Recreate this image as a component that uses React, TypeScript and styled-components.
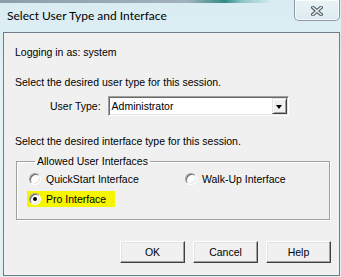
import styled, { createGlobalStyle } from 'styled-components';

const GlobalStyle = createGlobalStyle`
  html, body {
    margin: 0;
    padding: 0;
    width: 341px;
    height: 277px;
    overflow: hidden;
  }
  body {
    font-family: "Liberation Sans", Arial, sans-serif;
    font-size: 10.5px;
    color: #000;
  }
`;

const Window = styled.div`
  width: 341px;
  height: 277px;
  display: flex;
  flex-direction: column;
  background: linear-gradient(to bottom, #d9ecf2 0%, #e6f3f6 40%, #e2f0f4 100%);
  box-sizing: border-box;
`;

const GlassStrip = styled.div`
  height: 3px;
  background: linear-gradient(
    to right,
    #8e9ea9 0%,
    #a2b1bb 55%,
    #2f8c86 66%,
    #8cc6c8 71%,
    #d9ecf2 80%,
    #d9ecf2 100%
  );
`;

const TitleBar = styled.div`
  height: 29px;
  display: flex;
  align-items: flex-start;
  justify-content: space-between;
`;

const Title = styled.span`
  font-family: Lato, "Liberation Sans", sans-serif;
  font-size: 12px;
  line-height: 16px;
  padding: 5px 0 0 7px;
  color: #000;
`;

const CloseButton = styled.div`
  width: 44px;
  height: 18px;
  margin-top: -3px;
  margin-right: 1px;
  display: flex;
  align-items: center;
  justify-content: center;
  padding-top: 2px;
  border: 1px solid #8d9aa5;
  border-top: none;
  border-radius: 0 0 5px 5px;
  background: linear-gradient(to bottom, #e9f3f6, #dcebf0);
  box-shadow: inset 0 0 0 1px rgba(255, 255, 255, 0.7);
`;

const Client = styled.div`
  flex: 1;
  margin: 0 1px 1px 3px;
  border: 1px solid #6f7d88;
  background: #f0f0f0;
  display: flex;
  flex-direction: column;
  padding: 13px 0 0 11px;
`;

const Line = styled.div<{ $top?: number }>`
  line-height: 13px;
  margin-top: ${(p) => p.$top ?? 0}px;
  white-space: nowrap;
`;

const FieldRow = styled.div`
  display: flex;
  align-items: center;
  margin-top: 7px;
  padding-left: 35px;
  gap: 7px;
`;

const Label = styled.span`
  line-height: 13px;
`;

const SelectBox = styled.div`
  width: 181px;
  height: 20px;
  box-sizing: border-box;
  display: flex;
  align-items: center;
  justify-content: space-between;
  background: #fff;
  border: 1px solid;
  border-color: #a0a0a0 #fff #fff #a0a0a0;
  box-shadow: inset 1px 1px 0 #696969, inset -1px -1px 0 #e3e3e3;
  padding: 1px 1px 1px 3px;
`;

const DropButton = styled.div`
  width: 15px;
  height: 16px;
  box-sizing: border-box;
  background: #f0f0f0;
  border: 1px solid;
  border-color: #e3e3e3 #404040 #404040 #e3e3e3;
  box-shadow: inset 1px 1px 0 #fff, inset -1px -1px 0 #a0a0a0;
  display: flex;
  align-items: center;
  justify-content: center;
`;

const Triangle = styled.span`
  width: 0;
  height: 0;
  border-left: 3.5px solid transparent;
  border-right: 3.5px solid transparent;
  border-top: 4px solid #000;
  margin-top: 1px;
`;

const GroupBox = styled.fieldset`
  margin: 7px 9px 0 1px;
  padding: 3px 0 12px 12px;
  border: 1px solid #a0a0a0;
  box-shadow: inset 1px 1px 0 #fff, 1px 1px 0 #fff;
  display: grid;
  grid-template-columns: 156px 1fr;
  row-gap: 4px;
  min-width: 0;
`;

const Legend = styled.legend`
  padding: 0 2px;
  margin-left: 6px;
  line-height: 13px;
`;

const RadioItem = styled.label<{ $highlight?: boolean }>`
  display: inline-flex;
  align-items: center;
  gap: 5px;
  height: 16px;
  justify-self: start;
  background: ${(p) => (p.$highlight ? '#f5f500' : 'transparent')};
  margin-left: ${(p) => (p.$highlight ? '-2px' : '0')};
  padding: ${(p) => (p.$highlight ? '0 9px 0 2px' : '0')};
`;

const RadioCircle = styled.span<{ $checked?: boolean }>`
  width: 12px;
  height: 12px;
  box-sizing: border-box;
  border-radius: 50%;
  background: #fff;
  border: 1px solid;
  border-color: #a0a0a0 #ffffff #ffffff #a0a0a0;
  box-shadow: inset 1px 1px 0 #696969, inset -1px -1px 0 #e3e3e3;
  display: flex;
  align-items: center;
  justify-content: center;
  &::after {
    content: '';
    width: 4px;
    height: 4px;
    border-radius: 50%;
    background: ${(p) => (p.$checked ? '#000' : 'transparent')};
  }
`;

const ButtonRow = styled.div`
  display: flex;
  justify-content: flex-end;
  gap: 8px;
  margin-top: 21px;
  padding-right: 8px;
`;

const Button = styled.button`
  width: 65px;
  height: 22px;
  box-sizing: border-box;
  font-family: "Liberation Sans", Arial, sans-serif;
  font-size: 10.5px;
  color: #000;
  background: #f0f0f0;
  border: 1px solid;
  border-color: #fff #404040 #404040 #fff;
  box-shadow: inset -1px -1px 0 #a0a0a0, inset 1px 1px 0 #e3e3e3;
  padding: 0;
`;

function CloseGlyph() {
  return (
    <svg width="12" height="10" viewBox="0 0 12 10">
      <path d="M2 1.5 L10 8.5 M10 1.5 L2 8.5" stroke="#4b5662" strokeWidth="3.6" strokeLinecap="square" />
      <path d="M2 1.5 L10 8.5 M10 1.5 L2 8.5" stroke="#e4e9ee" strokeWidth="1.6" strokeLinecap="square" />
    </svg>
  );
}

export default function App() {
  return (
    <>
      <GlobalStyle />
      <Window>
        <GlassStrip />
        <TitleBar>
          <Title>Select User Type and Interface</Title>
          <CloseButton>
            <CloseGlyph />
          </CloseButton>
        </TitleBar>
        <Client>
          <Line>Logging in as: system</Line>
          <Line $top={17}>Select the desired user type for this session.</Line>
          <FieldRow>
            <Label>User Type:</Label>
            <SelectBox>
              <span>Administrator</span>
              <DropButton>
                <Triangle />
              </DropButton>
            </SelectBox>
          </FieldRow>
          <Line $top={19}>Select the desired interface type for this session.</Line>
          <GroupBox>
            <Legend>Allowed User Interfaces</Legend>
            <RadioItem>
              <RadioCircle />
              QuickStart Interface
            </RadioItem>
            <RadioItem>
              <RadioCircle />
              Walk-Up Interface
            </RadioItem>
            <RadioItem $highlight>
              <RadioCircle $checked />
              Pro Interface
            </RadioItem>
          </GroupBox>
          <ButtonRow>
            <Button>OK</Button>
            <Button>Cancel</Button>
            <Button>Help</Button>
          </ButtonRow>
        </Client>
      </Window>
    </>
  );
}
